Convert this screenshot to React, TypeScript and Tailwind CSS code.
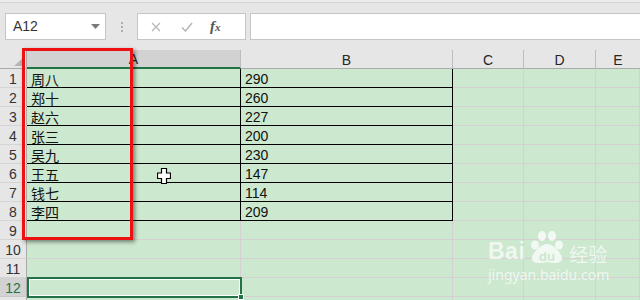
import React from "react";

const data: [string, string][] = [
  ["周八", "290"],
  ["郑十", "260"],
  ["赵六", "227"],
  ["张三", "200"],
  ["吴九", "230"],
  ["王五", "147"],
  ["钱七", "114"],
  ["李四", "209"],
];

const cjk = { fontFamily: '"Noto Sans CJK SC", "Noto Sans", sans-serif' };
const lat = { fontFamily: '"Liberation Sans", Arial, sans-serif' };

function RowHeader({ n }: { n: number }) {
  const sel = n === 12;
  return (
    <div
      className={
        sel
          ? "box-border flex items-end justify-center border-r border-b border-r-[#ababab] border-b-[#c8c8c8] bg-[#d2d2d2] pb-[1px] text-[14px] leading-none text-[#217346]"
          : "box-border flex items-end justify-center border-r border-b border-r-[#ababab] border-b-[#d4d4d4] bg-[#e6e6e6] pb-[1px] text-[14px] leading-none text-[#333333]"
      }
      style={lat}
    >
      {n <= 12 ? n : null}
    </div>
  );
}

function Cell({ text, black, cjkFont }: { text?: string; black?: boolean; cjkFont?: boolean }) {
  return (
    <div
      className={
        black
          ? "box-border flex items-end overflow-hidden whitespace-nowrap border-r border-b border-black bg-[#cce8cf] pb-[1px] pl-[4px] text-[14px] leading-none text-[#111111]"
          : "box-border flex items-end overflow-hidden whitespace-nowrap border-r border-b border-[#d6d0d5] bg-[#cce8cf] pb-[1px] pl-[4px] text-[14px] leading-none text-[#111111]"
      }
      style={cjkFont ? cjk : lat}
    >
      {text}
    </div>
  );
}

export default function App() {
  const rows = Array.from({ length: 13 }, (_, i) => i + 1);
  return (
    <div className="relative h-[300px] w-[640px] overflow-hidden bg-[#e6e6e6]" style={lat}>
      {/* toolbar */}
      <div className="h-[2px] bg-[#ececec]" />
      <div className="h-[1px] bg-[#d4d4d4]" />
      <div className="flex h-[47px] items-start pt-[10px]">
        <div className="ml-[5px] box-border flex h-[27px] w-[101px] items-center justify-between border border-[#c6c6c6] bg-white pl-[7px] pr-[5px]">
          <span className="text-[14px] text-[#333333]" style={lat}>A12</span>
          <svg width="9" height="5" viewBox="0 0 9 5"><path d="M0 0 L9 0 L4.5 5 Z" fill="#7a7a7a" /></svg>
        </div>
        <div className="ml-[14px] flex h-[27px] w-[3px] flex-col items-center justify-center gap-[2px]">
          <div className="h-[2px] w-[2px] bg-[#b0b0b0]" />
          <div className="h-[2px] w-[2px] bg-[#b0b0b0]" />
          <div className="h-[2px] w-[2px] bg-[#b0b0b0]" />
        </div>
        <div className="ml-[14px] box-border flex h-[27px] w-[109px] items-center border border-[#c6c6c6] bg-white">
          <svg className="ml-[13px]" width="10" height="10" viewBox="0 0 10 10">
            <path d="M1 1 L9 9 M9 1 L1 9" stroke="#b8b8b8" strokeWidth="1.3" />
          </svg>
          <svg className="ml-[20px]" width="12" height="10" viewBox="0 0 12 10">
            <path d="M1 5.5 L4.5 9 L11 1" stroke="#b8b8b8" strokeWidth="1.6" fill="none" />
          </svg>
          <span
            className="ml-[17px] text-[15px] font-bold italic text-[#555555]"
            style={{ fontFamily: '"Liberation Serif", "Times New Roman", serif' }}
          >
            f<span className="text-[11px]">x</span>
          </span>
        </div>
        <div className="ml-[4px] box-border h-[27px] flex-1 border-y border-l border-[#c6c6c6] bg-white" />
      </div>

      {/* sheet */}
      <div className="grid grid-cols-[27px_214px_212px_71px_72px_44px] grid-rows-[19px] auto-rows-[19px]">
        <div className="relative box-border border-r border-b border-[#ababab] bg-[#e6e6e6]">
          <svg className="absolute right-[2px] bottom-[2px]" width="10" height="9" viewBox="0 0 10 9">
            <path d="M10 0 L10 9 L0 9 Z" fill="#b5b5b5" />
          </svg>
        </div>
        <div className="box-border flex items-center justify-center border-r border-r-[#bdbdbd] border-b-2 border-b-[#217346] bg-[#d2d2d2] pt-[1px] text-[14px] leading-none text-[#262626]">A</div>
        <div className="box-border flex items-center justify-center border-r border-b border-r-[#bdbdbd] border-b-[#ababab] bg-[#e6e6e6] pt-[2px] text-[14px] leading-none text-[#262626]">B</div>
        <div className="box-border flex items-center justify-center border-r border-b border-r-[#bdbdbd] border-b-[#ababab] bg-[#e6e6e6] pt-[2px] text-[14px] leading-none text-[#262626]">C</div>
        <div className="box-border flex items-center justify-center border-r border-b border-r-[#bdbdbd] border-b-[#ababab] bg-[#e6e6e6] pt-[2px] text-[14px] leading-none text-[#262626]">D</div>
        <div className="box-border flex items-center justify-center border-b border-b-[#ababab] bg-[#e6e6e6] pt-[2px] text-[14px] leading-none text-[#262626]">E</div>

        {rows.map((n) => {
          const d = data[n - 1];
          return (
            <React.Fragment key={n}>
              <RowHeader n={n} />
              <Cell text={d ? d[0] : undefined} black={!!d} cjkFont />
              <Cell text={d ? d[1] : undefined} black={!!d} />
              <Cell />
              <Cell />
              <Cell />
            </React.Fragment>
          );
        })}
      </div>

      {/* selection A12 */}
      <div className="absolute left-[27px] top-[277px] box-border h-[21px] w-[215px] border-2 border-[#217346] shadow-[inset_0_0_0_1px_#ffffff]" />
      <div className="absolute left-[238px] top-[294px] h-[6px] w-[6px] border border-white bg-[#217346]" />

      {/* red annotation box */}
      <div className="absolute left-[22px] top-[48px] box-border h-[192px] w-[111px] border-[3px] border-[#ee1111] shadow-[2px_2px_4px_rgba(0,0,0,0.45)]" />

      {/* cursor */}
      <svg className="absolute left-[157px] top-[168px]" width="14" height="16" viewBox="0 0 14 16">
        <path
          d="M4.5 0.5 H9.5 V5 H13.5 V10.5 H9.5 V15.5 H4.5 V10.5 H0.5 V5 H4.5 Z"
          fill="#ffffff"
          stroke="#000000"
          strokeWidth="1.2"
        />
      </svg>

      {/* watermark */}
      <div className="absolute left-[488px] top-[230px] flex flex-col items-start text-white/70">
        <div className="flex items-end">
          <span className="text-[23px] font-bold leading-none tracking-[0.5px]" style={lat}>Bai</span>
          <svg width="42" height="35" viewBox="0 0 42 35" className="-mb-[2px] ml-[1px]">
            <g fill="rgba(255,255,255,0.75)">
              <ellipse cx="9" cy="15" rx="4" ry="4.5" />
              <ellipse cx="16" cy="6" rx="4" ry="5" />
              <ellipse cx="26" cy="6" rx="4" ry="5" />
              <ellipse cx="33" cy="15" rx="4" ry="4.5" />
              <path d="M21 14 C28 14 36 24 36 28 C36 33 31 34 21 32 C11 34 6 33 6 28 C6 24 14 14 21 14 Z" />
            </g>
            <text x="21" y="31" textAnchor="middle" fontSize="13" fontWeight="bold" fill="#cce8cf" fontFamily="Liberation Sans, Arial, sans-serif">du</text>
          </svg>
          <span className="ml-[1px] text-[19px] leading-none" style={cjk}>经验</span>
        </div>
        <span className="mt-[5px] text-[14px] leading-none" style={{ fontFamily: '"Noto Sans", sans-serif' }}>jingyan.baidu.com</span>
      </div>
    </div>
  );
}
